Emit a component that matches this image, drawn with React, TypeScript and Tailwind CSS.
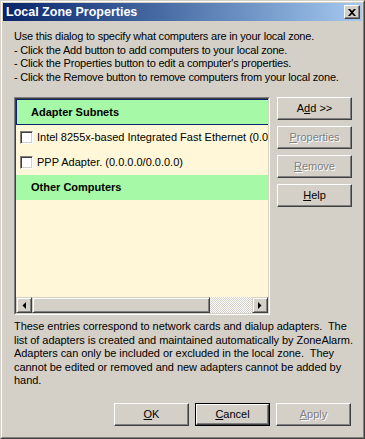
import React from "react"

const font = { fontFamily: '"Liberation Sans", Arial, sans-serif' }

type BtnProps = {
    label: React.ReactNode
    disabled?: boolean
    isDefault?: boolean
}

const WinButton: React.FC<BtnProps> = ({ label, disabled, isDefault }) => {
    const inner = (
        <div className="h-full w-full border border-t-white border-l-white border-r-[#404040] border-b-[#404040] shadow-[inset_-1px_-1px_0_#808080] flex items-center justify-center">
            <span className={disabled ? "text-[#808080] [text-shadow:1px_1px_0_#fff]" : "text-black"}>{label}</span>
        </div>
    )
    if (isDefault) {
        return <div className="w-[75px] h-[23px] border border-black">{inner}</div>
    }
    return <div className="w-[75px] h-[23px]">{inner}</div>
}

const Check = () => (
    <div className="w-[13px] h-[13px] bg-white border border-t-[#808080] border-l-[#808080] border-r-white border-b-white shadow-[inset_1px_1px_0_#404040,inset_-1px_-1px_0_#d4d0c8] shrink-0" />
)

const Arrow = ({ dir }: { dir: "left" | "right" }) => (
    <div className="w-[16px] h-[16px] shrink-0 bg-[#d4d0c8] border border-t-[#d4d0c8] border-l-[#d4d0c8] border-r-[#404040] border-b-[#404040] shadow-[inset_1px_1px_0_#fff,inset_-1px_-1px_0_#808080] flex items-center justify-center">
        <svg width="4" height="7" viewBox="0 0 4 7">
            {dir === "left"
                ? <path d="M4 0 L4 7 L0.5 3.5 Z" fill="#000" />
                : <path d="M0 0 L0 7 L3.5 3.5 Z" fill="#000" />}
        </svg>
    </div>
)

export default function App() {
    return (
        <div style={font} className="w-[365px] h-[439px] bg-[#d4d0c8] text-[11px] text-black border border-t-[#d4d0c8] border-l-[#d4d0c8] border-r-[#404040] border-b-[#404040]">
            <div className="h-full border border-t-white border-l-white border-r-[#808080] border-b-[#808080] p-px flex flex-col">
                {/* title bar */}
                <div className="h-[18px] bg-linear-to-r from-[#0a246a] to-[#a6caf0] flex items-center justify-between pl-[3px] pr-[2px]">
                    <span className="text-white font-bold text-[12.5px]">Local Zone Properties</span>
                    <div className="w-[16px] h-[14px] bg-[#d4d0c8] border border-t-white border-l-white border-r-[#404040] border-b-[#404040] shadow-[inset_-1px_-1px_0_#808080] flex items-center justify-center">
                        <svg width="8" height="7" viewBox="0 0 8 7">
                            <path d="M0 0 L2 0 L4 2 L6 0 L8 0 L5 3.5 L8 7 L6 7 L4 5 L2 7 L0 7 L3 3.5 Z" fill="#000" />
                        </svg>
                    </div>
                </div>

                <div className="flex-1 px-[11px] pt-[9px] flex flex-col">
                    <div className="leading-[13.5px] whitespace-nowrap tracking-[-0.2px]">
                        <p>Use this dialog to specify what computers are in your local zone.</p>
                        <p>- Click the Add button to add computers to your local zone.</p>
                        <p>- Click the Properties button to edit a computer's properties.</p>
                        <p>- Click the Remove button to remove computers from your local zone.</p>
                    </div>

                    <div className="flex gap-[7px] mt-[13px]">
                        {/* list */}
                        <div className="w-[256px] h-[218px] border border-t-[#808080] border-l-[#808080] border-r-white border-b-white">
                            <div className="h-full border border-t-[#404040] border-l-[#404040] border-r-[#d4d0c8] border-b-[#d4d0c8] bg-[#fff7d7] flex flex-col overflow-hidden">
                                <div className="h-[26px] shrink-0 bg-[#a6f9a6] border border-r-0 border-[#0a246a] flex items-center pl-[14px] font-bold">
                                    Adapter Subnets
                                </div>
                                <div className="h-[25px] shrink-0 flex items-center pl-[4px] gap-[4px] whitespace-nowrap">
                                    <Check />
                                    <span>Intel 8255x-based Integrated Fast Ethernet (0.0.0.0/0.0.0.0)</span>
                                </div>
                                <div className="h-[25px] shrink-0 flex items-center pl-[4px] gap-[4px] whitespace-nowrap">
                                    <Check />
                                    <span>PPP Adapter. (0.0.0.0/0.0.0.0)</span>
                                </div>
                                <div className="h-[25px] shrink-0 bg-[#a6f9a6] flex items-center pl-[15px] font-bold">
                                    Other Computers
                                </div>
                                <div className="flex-1" />
                                {/* horizontal scrollbar */}
                                <div className="h-[16px] shrink-0 flex">
                                    <Arrow dir="left" />
                                    <div className="w-[178px] h-full bg-[#d4d0c8] border border-t-[#d4d0c8] border-l-[#d4d0c8] border-r-[#404040] border-b-[#404040] shadow-[inset_1px_1px_0_#fff,inset_-1px_-1px_0_#808080]" />
                                    <div className="flex-1 h-full bg-[repeating-conic-gradient(#d4d0c8_0_25%,#ffffff_0_50%)] bg-size-[2px_2px]" />
                                    <Arrow dir="right" />
                                </div>
                            </div>
                        </div>

                        {/* side buttons */}
                        <div className="flex flex-col gap-[6px]">
                            <WinButton label={<>A<u>d</u>d &gt;&gt;</>} />
                            <WinButton label={<><u>P</u>roperties</>} disabled />
                            <WinButton label={<><u>R</u>emove</>} disabled />
                            <WinButton label={<><u>H</u>elp</>} />
                        </div>
                    </div>

                    <div className="mt-[5px] leading-[13.5px] whitespace-pre tracking-[-0.05px]">
                        <p>These entries correspond to network cards and dialup adapters.  The</p>
                        <p>list of adapters is created and maintained automatically by ZoneAlarm.</p>
                        <p>Adapters can only be included or excluded in the local zone.  They</p>
                        <p>cannot be edited or removed and new adapters cannot be added by</p>
                        <p>hand.</p>
                    </div>

                    <div className="mt-auto mb-[10px] flex justify-end gap-[6px]">
                        <WinButton label={<><u>O</u>K</>} />
                        <WinButton label={<><u>C</u>ancel</>} isDefault />
                        <WinButton label={<><u>A</u>pply</>} disabled />
                    </div>
                </div>
            </div>
        </div>
    )
}
